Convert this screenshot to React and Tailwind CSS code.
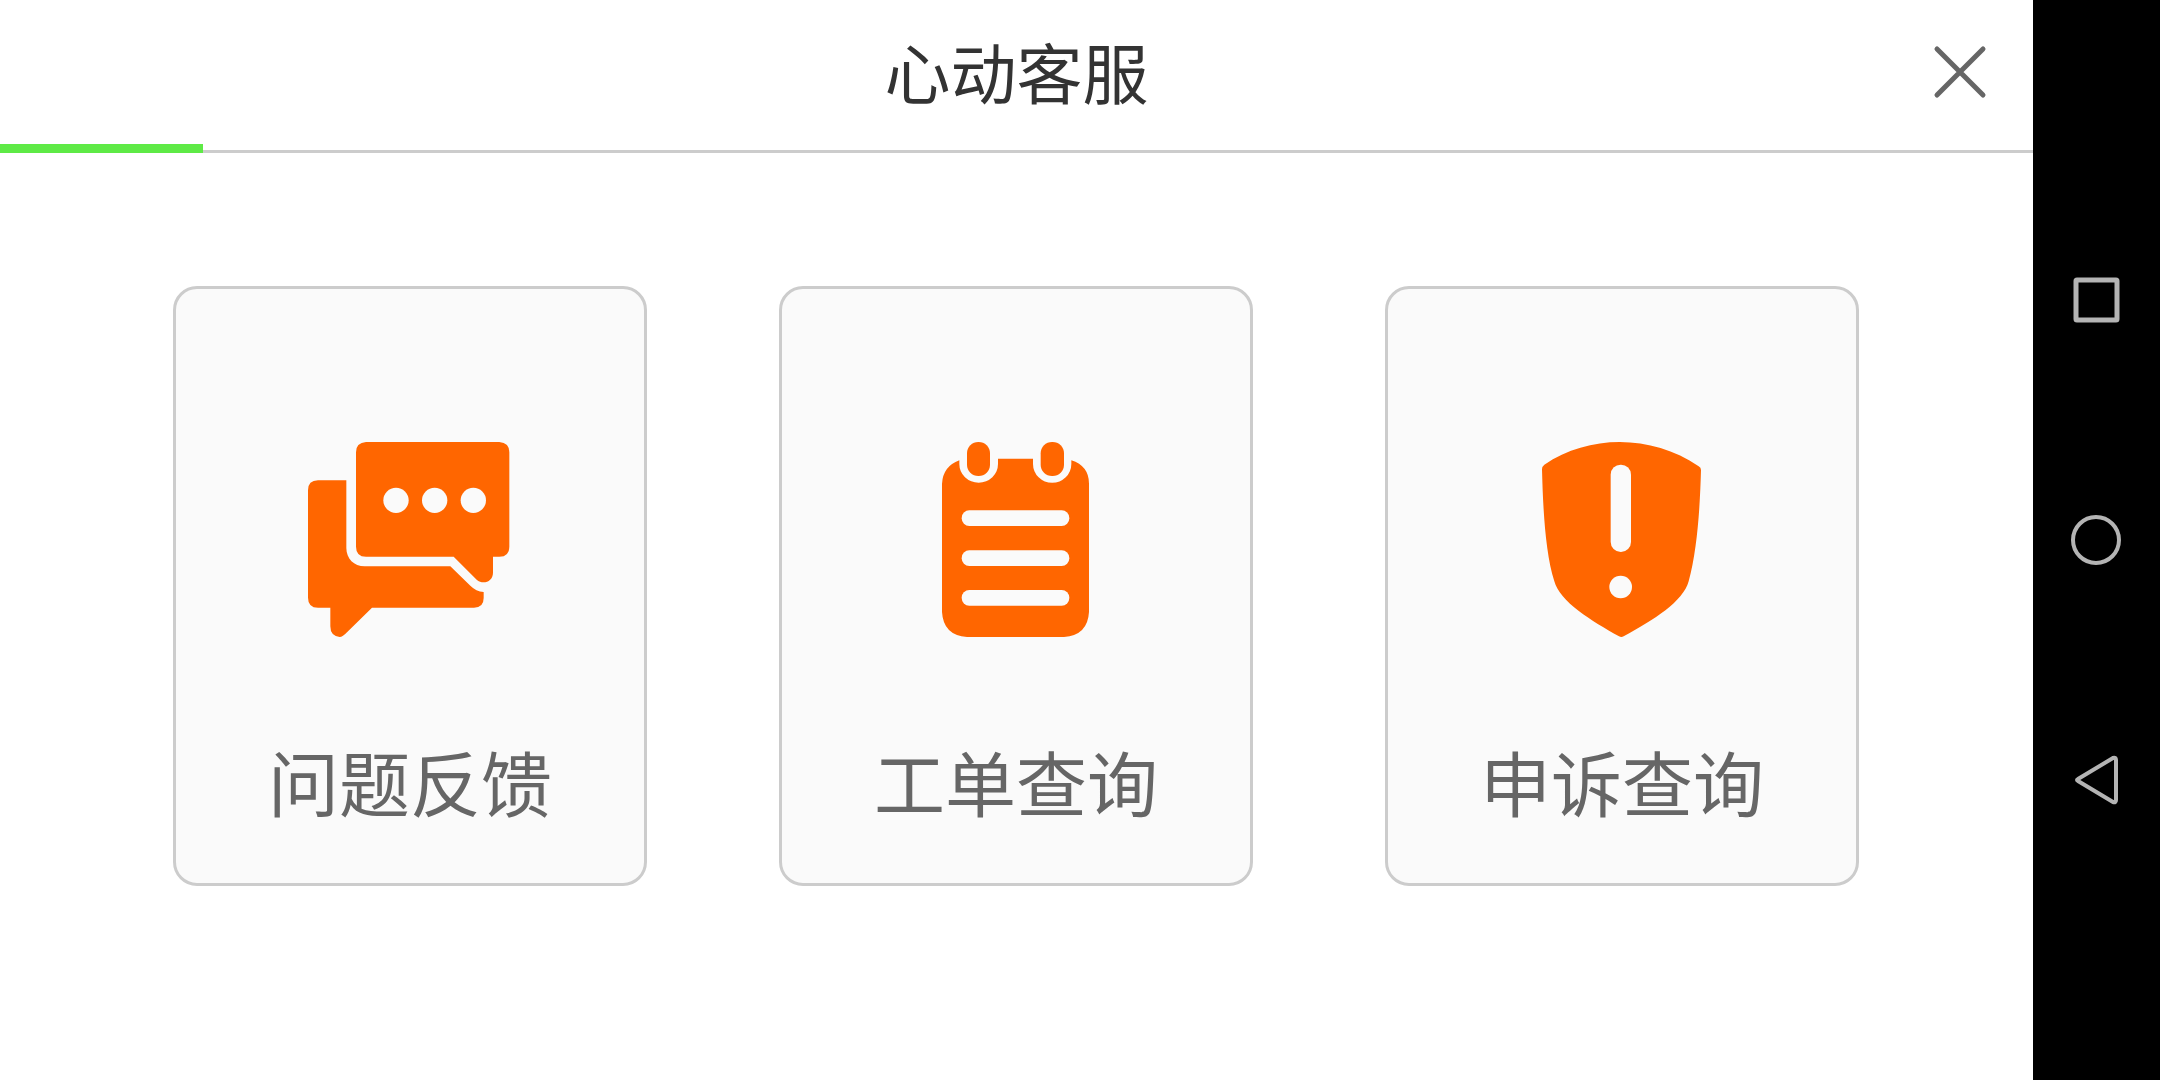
function FeedbackIcon() {
  return (
    <svg aria-hidden="true" className="h-[195px] w-[204px]" viewBox="54 66 612 585">
      <path
        fill="#ff6600"
        d="M84 181H169V384C169 416 192 439 224 439H481L541 497Q558 514 581 516V534Q581 563 552 563H246L171 637Q158 651 149 651Q121 648 121 619V563H84Q54 563 54 533V211Q54 181 84 181Z"
      />
      <path
        fill="#ff6600"
        d="M228 66H628Q658 68 658 97V380Q658 410 628 410H609V458C609 484 580 496 560 479L491 410H228Q198 410 198 380V97Q198 68 228 66Z"
      />
      <g fill="#fafafa">
        <circle cx="318" cy="241" r="38" />
        <circle cx="434" cy="241" r="38" />
        <circle cx="550" cy="241" r="38" />
      </g>
    </svg>
  );
}

function OrderIcon() {
  return (
    <svg aria-hidden="true" className="h-[195px] w-[149px]" viewBox="66 66 447 585">
      <g fill="#ff6600">
        <path d="M118 121V132A58 56 0 0 0 234 132V116H339V132A57 56 0 0 0 454 132V121Q507 138 507 191V576Q503 646 432 651H141Q70 646 66 576V191Q69 139 118 121Z" />
        <rect x="141" y="66" width="69" height="102" rx="34" />
        <rect x="362" y="66" width="70" height="102" rx="34" />
      </g>
      <g fill="#fafafa">
        <rect x="125" y="271" width="323" height="47" rx="23" />
        <rect x="125" y="391" width="323" height="47" rx="23" />
        <rect x="125" y="510" width="323" height="47" rx="23" />
      </g>
    </svg>
  );
}

function AppealIcon() {
  return (
    <svg aria-hidden="true" className="h-[195px] w-[160px]" viewBox="66 66 480 585">
      <path
        fill="#ff6600"
        d="M73 134C209 43 395 43 536 139Q543 143 543 150C540 260 532 390 506 484C490 544 402 600 311 649Q304 653 297 649C216 604 119 545 103 484C76 400 69 266 66 148Q66 139 73 134Z"
      />
      <rect x="272" y="134" width="61" height="262" rx="30" fill="#fafafa" />
      <circle cx="302" cy="501" r="34" fill="#fafafa" />
    </svg>
  );
}

const entries = [
  { label: '问题反馈', Icon: FeedbackIcon },
  { label: '工单查询', Icon: OrderIcon },
  { label: '申诉查询', Icon: AppealIcon },
];

function SystemBar() {
  return (
    <nav
      aria-label="System"
      className="flex w-[127px] shrink-0 flex-col items-center justify-center gap-44 bg-black text-[#b4b4b4]"
    >
      <button type="button" aria-label="Recent apps" className="size-16">
        <svg className="size-16" viewBox="0 0 64 64" fill="none" stroke="currentColor" strokeWidth="5" strokeLinejoin="round">
          <rect x="11" y="12" width="41" height="40" rx="1" />
        </svg>
      </button>
      <button type="button" aria-label="Home" className="size-16">
        <svg className="size-16" viewBox="0 0 64 64" fill="none" stroke="currentColor" strokeWidth="4">
          <circle cx="31" cy="32" r="23" />
        </svg>
      </button>
      <button type="button" aria-label="Back" className="size-16">
        <svg
          className="size-16"
          viewBox="0 0 64 64"
          fill="none"
          stroke="currentColor"
          strokeWidth="4"
          strokeLinejoin="round"
        >
          <path d="M13 31Q11 32 13 33L48 54Q51 55 51 52V12Q51 9 48 10Z" />
        </svg>
      </button>
    </nav>
  );
}

export default function App() {
  return (
    <div className="flex min-h-screen bg-white font-['Noto_Sans_CJK_SC',sans-serif]">
      <div className="min-w-0 flex-1">
        <header className="relative border-b-3 border-[#cccccc] pt-5 pb-[30px]">
          <h1 className="text-center text-[66px] leading-[100px] font-normal text-[#333333]">心动客服</h1>
          <button
            type="button"
            aria-label="关闭"
            className="absolute top-8 right-[33px] flex size-20 items-center justify-center text-[#666666]"
          >
            <svg
              className="size-20"
              viewBox="0 0 80 80"
              fill="none"
              stroke="currentColor"
              strokeWidth="5"
              strokeLinecap="round"
            >
              <path d="M17 17L63 63M63 17L17 63" />
            </svg>
          </button>
          <div
            role="progressbar"
            aria-label="加载进度"
            aria-valuenow={10}
            className="absolute -bottom-[3px] left-0 h-[9px] w-1/10 bg-[#5eea46]"
          />
        </header>
        <main className="grid grid-cols-3 gap-[132px] pt-[133px] pr-[174px] pl-[173px]">
          {entries.map(({ label, Icon }) => (
            <button
              key={label}
              type="button"
              className="flex flex-col items-center rounded-3xl border-3 border-[#cccccc] bg-[#fafafa] pt-[153px] pb-[53px]"
            >
              <Icon />
              <span className="mt-[93px] text-[71px] leading-[100px] whitespace-nowrap text-[#666666]">{label}</span>
            </button>
          ))}
        </main>
      </div>
      <SystemBar />
    </div>
  );
}
